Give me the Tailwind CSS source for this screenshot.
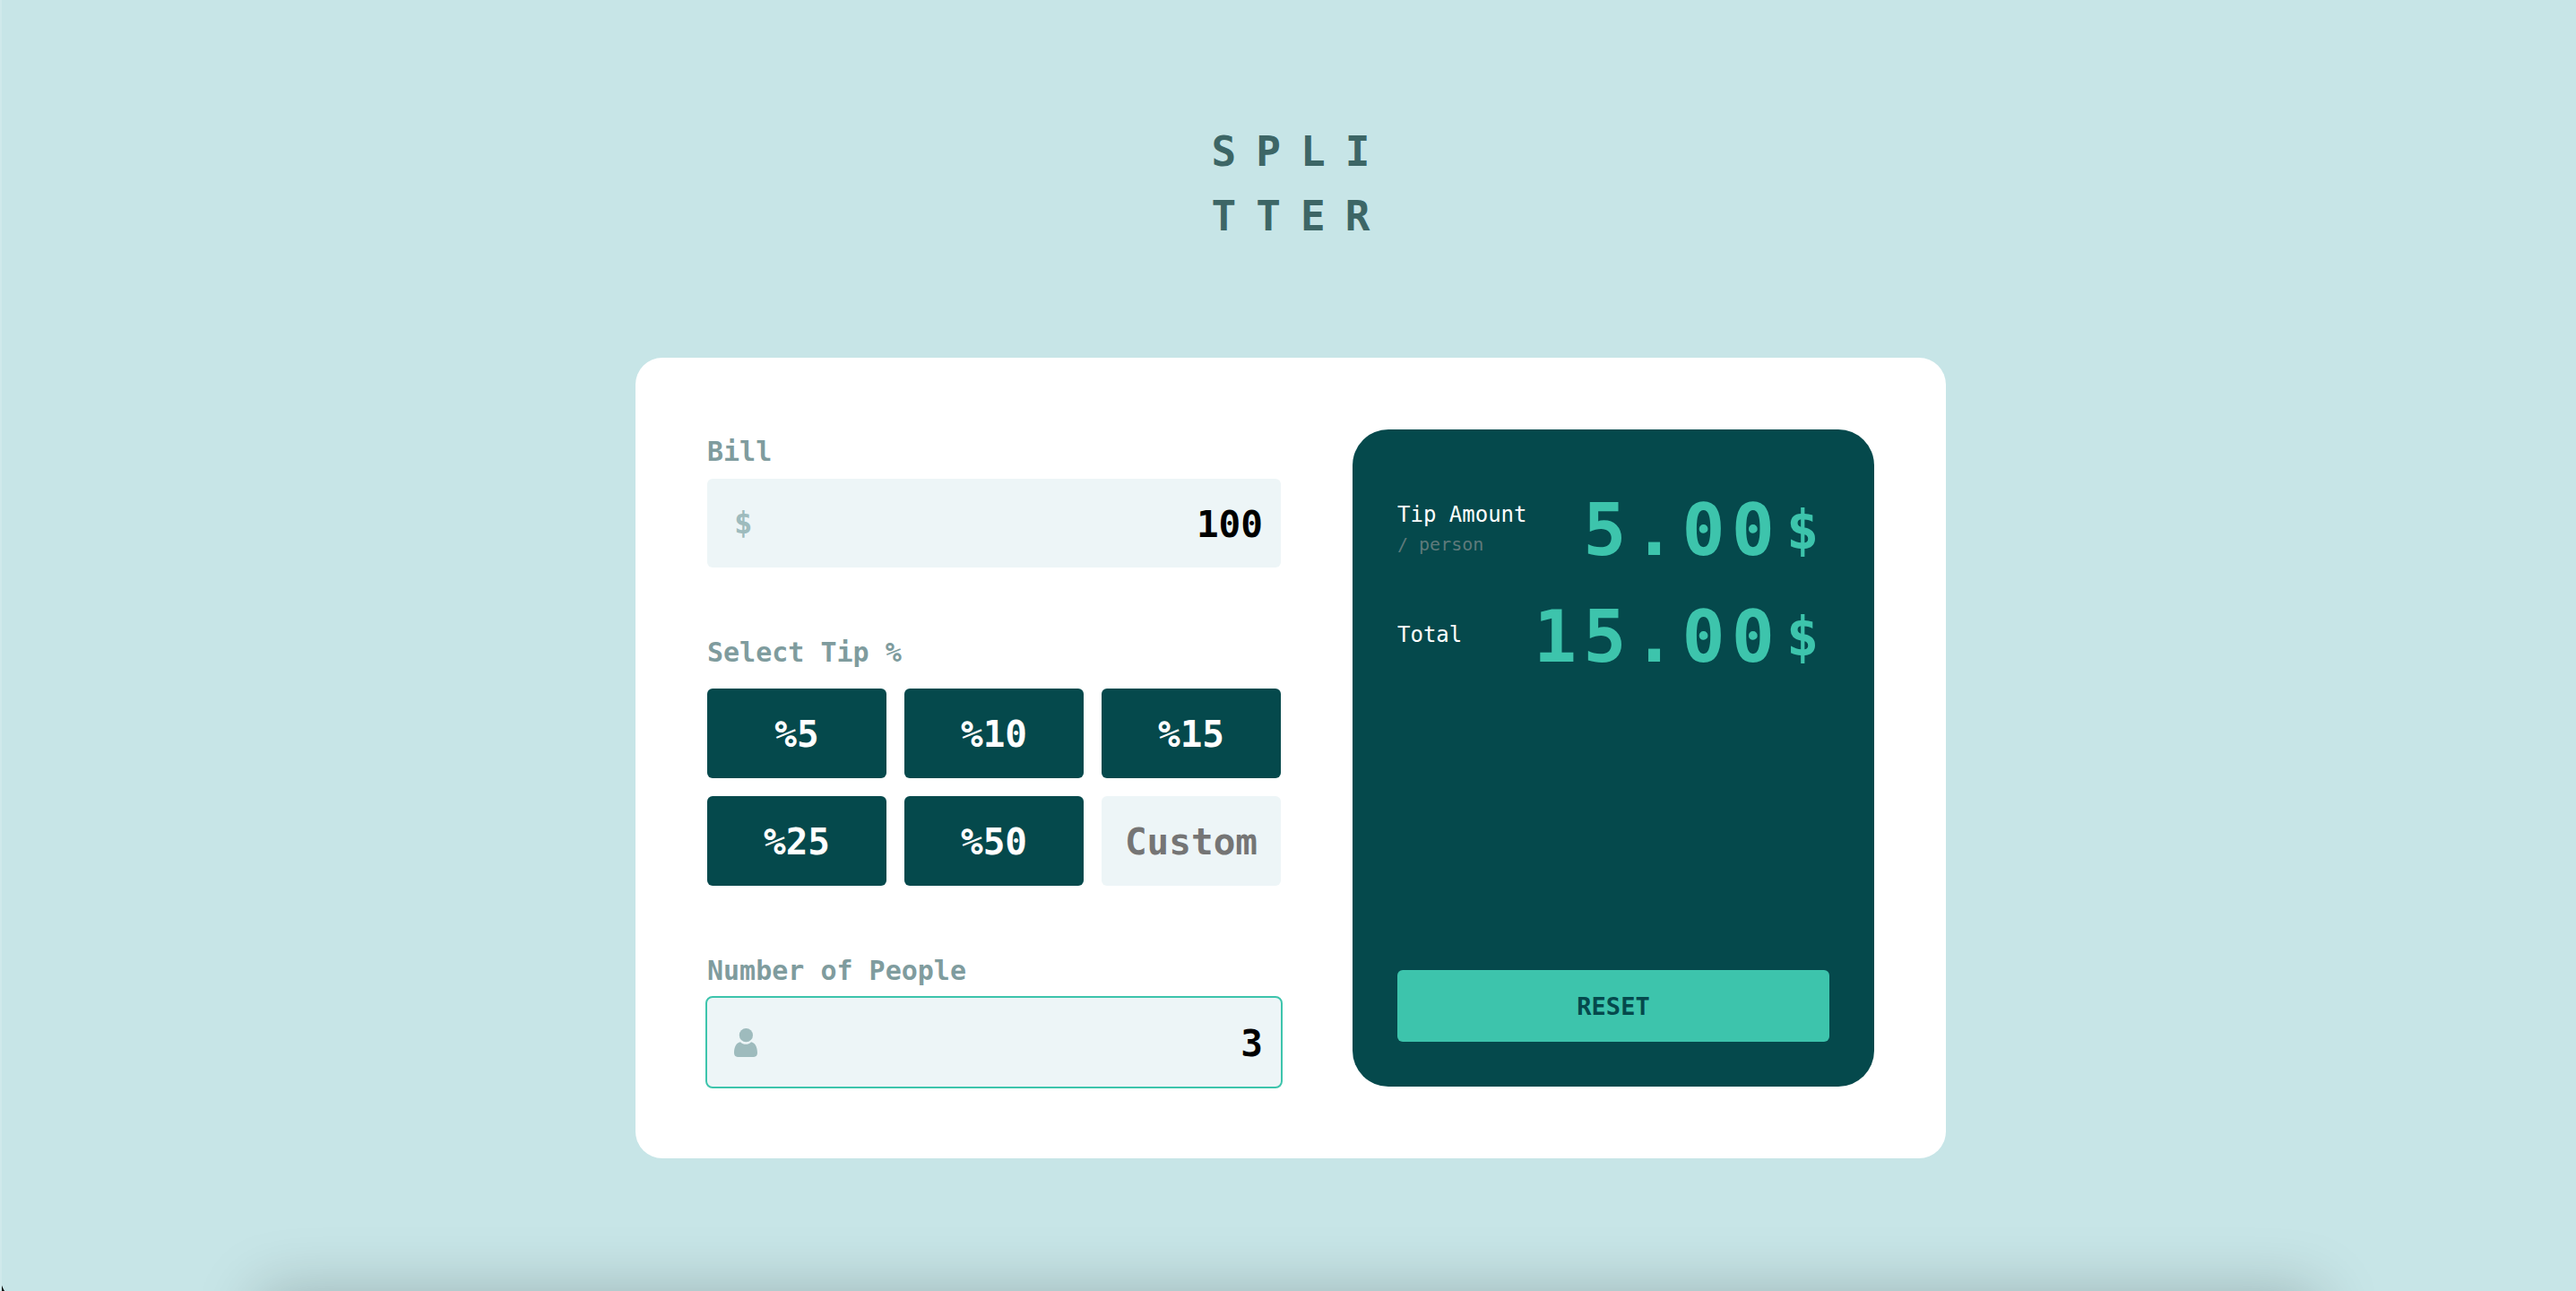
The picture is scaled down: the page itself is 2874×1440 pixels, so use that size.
<!DOCTYPE html>
<html lang="en">
<head>
<meta charset="utf-8">
<meta name="viewport" content="width=device-width, initial-scale=1">
<title>Splitter</title>
<script src="https://cdn.jsdelivr.net/npm/@tailwindcss/browser@4"></script>
</head>
<body class="bg-[#c7e5e7] font-['DejaVu_Sans_Mono','Liberation_Mono',monospace]">
<div class="relative flex min-h-screen flex-col items-center overflow-hidden border-l-2 border-[#d0e9eb] pt-[133px] pb-[148px] pl-1">
  <h1 class="mb-[122px] pl-[22px] text-[46px] leading-[72px] font-bold tracking-[22px] text-[#3d6666]">SPLI<br>TTER</h1>

  <main class="grid w-full max-w-[1462px] gap-20 rounded-[30px] bg-white p-20 lg:grid-cols-[640fr_582fr]">
    <form class="flex min-w-0 flex-col gap-[70px] text-[30px] leading-[45px] font-bold text-[#7f9c9e]">
      <div class="flex flex-col gap-2">
        <label for="bill" class="pt-0.5">Bill</label>
        <div class="flex h-[99px] items-center rounded-md bg-[#edf5f7] pr-5 pl-[30px]">
          <span class="text-[34px] text-[#9ebbbd]">$</span>
          <input id="bill" type="text" inputmode="numeric" value="100" class="h-full min-w-0 flex-1 bg-transparent pt-0.5 text-right text-[41px] text-black outline-none">
        </div>
      </div>

      <fieldset class="min-w-0">
        <legend class="mb-[18px] pt-0.5">Select Tip %</legend>
        <div class="grid grid-cols-3 gap-5 text-[41px] text-white">
          <button type="button" class="h-[100px] rounded-md bg-[#05494c] pt-0.5">%5</button>
          <button type="button" class="h-[100px] rounded-md bg-[#05494c] pt-0.5">%10</button>
          <button type="button" class="h-[100px] rounded-md bg-[#05494c] pt-0.5">%15</button>
          <button type="button" class="h-[100px] rounded-md bg-[#05494c] pt-0.5">%25</button>
          <button type="button" class="h-[100px] rounded-md bg-[#05494c] pt-0.5">%50</button>
          <input type="text" inputmode="numeric" aria-label="Custom tip" placeholder="Custom" class="h-[100px] w-full min-w-0 rounded-md bg-[#edf5f7] pt-0.5 text-center text-black outline-none placeholder:text-[#757575]">
        </div>
      </fieldset>

      <div class="flex flex-col gap-2">
        <label for="people" class="pt-0.5">Number of People</label>
        <div class="flex h-[99px] items-center rounded-md bg-[#edf5f7] pr-5 pl-[30px] outline-2 outline-[#3dc4ac]">
          <svg class="h-8 w-[26px]" viewBox="0 0 26 32" fill="#9ebbbd" aria-hidden="true">
            <circle cx="13.4" cy="7.7" r="7.6"/>
            <path d="M7 15.2C2.8 15.8 0 20.500 0 27.600C0 30.300 1.500 32 4 32H22C24.500 32 26 30.300 26 27.600C26 20.500 23.200 15.800 19 15.200C15.800 18.700 10.400 18.700 7 15.200Z"/>
          </svg>
          <input id="people" type="text" inputmode="numeric" value="3" class="h-full min-w-0 flex-1 bg-transparent pt-0.5 text-right text-[41px] text-black outline-none">
        </div>
      </div>
    </form>

    <section class="flex min-w-0 flex-col rounded-[40px] bg-[#05494c] p-[50px] text-white">
      <div class="flex h-[119px] items-center justify-between">
        <div>
          <h2 class="text-[24px] leading-9">Tip Amount</h2>
          <p class="text-[20px] leading-[30px] text-[#5e7a7b]">/ person</p>
        </div>
        <p class="flex items-center gap-1.5 pt-1.5 pr-3 font-bold text-[#3dc4ac]"><span class="text-[80px] leading-[113px] tracking-[7px]">5.00</span><span class="text-[60px] leading-[113px]">$</span></p>
      </div>
      <div class="flex h-[119px] items-center justify-between">
        <h2 class="text-[24px] leading-9">Total</h2>
        <p class="flex items-center gap-1.5 pt-1.5 pr-3 font-bold text-[#3dc4ac]"><span class="text-[80px] leading-[113px] tracking-[7px]">15.00</span><span class="text-[60px] leading-[113px]">$</span></p>
      </div>
      <button type="button" class="mt-auto h-20 w-full rounded-md bg-[#3dc4ac] pt-0.5 text-[27px] font-bold text-[#05494c]">RESET</button>
    </section>
  </main>

  <!-- soft shade rising from the bottom edge -->
  <div class="absolute inset-x-[10%] top-full h-40 shadow-[0_0_70px_rgba(0,0,0,0.22)]"></div>
  <!-- dark rounded window corner -->
  <svg class="absolute bottom-0 -left-0.5 h-4 w-[5px]" viewBox="0 0 5 16" aria-hidden="true"><path d="M0 0Q1 10 5 16H0Z"/></svg>
</div>
</body>
</html>
